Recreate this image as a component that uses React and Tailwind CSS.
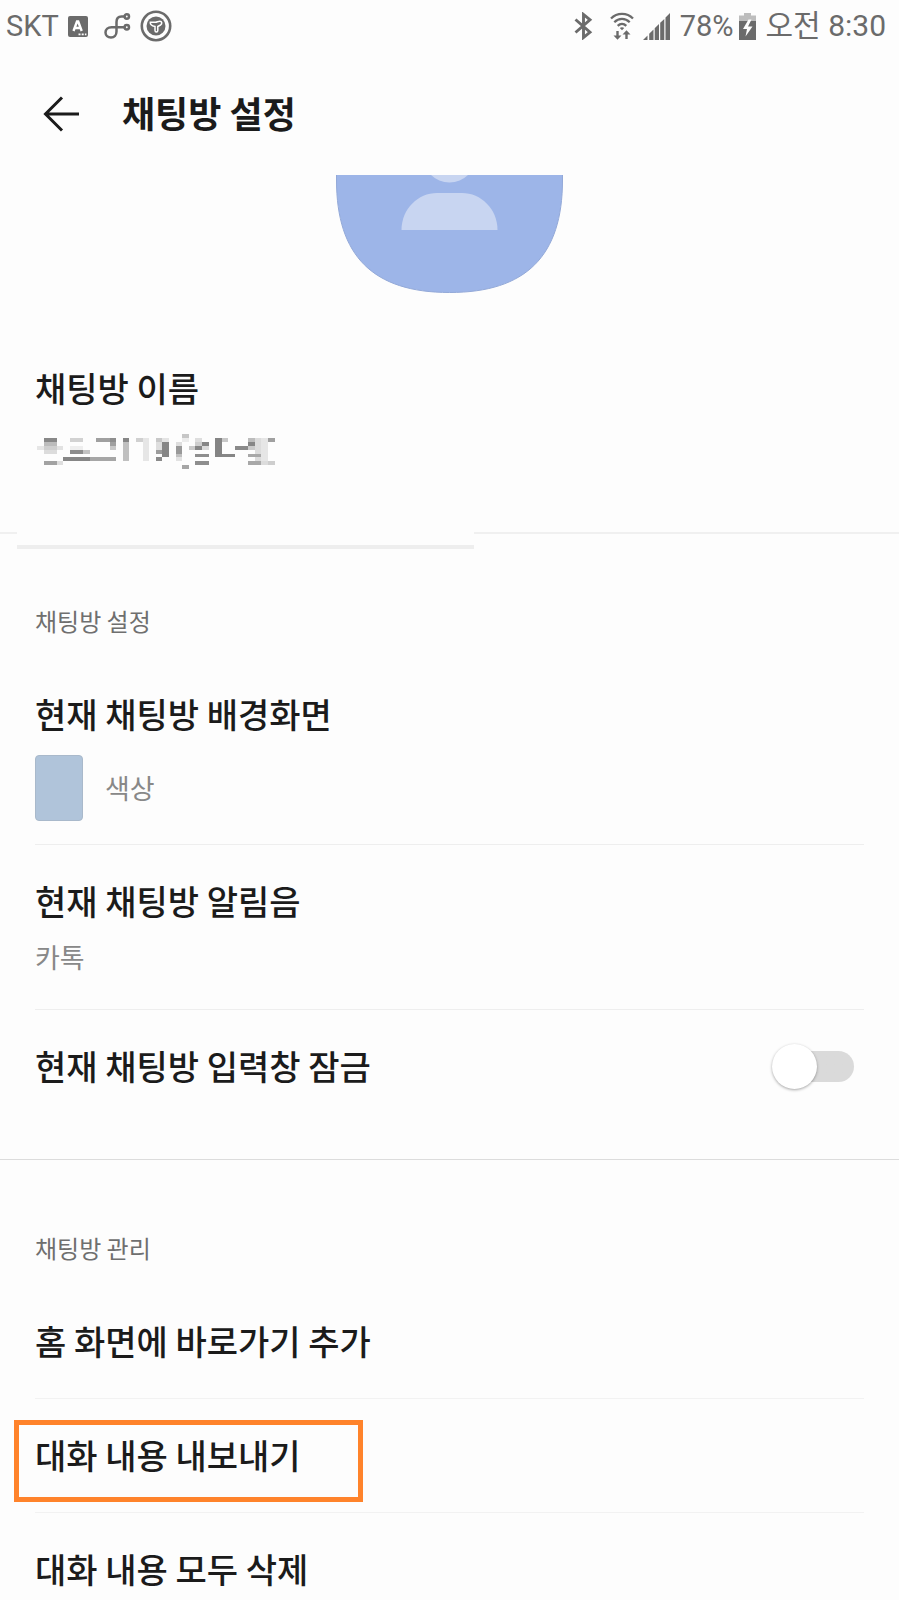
import { useState } from "react";

// [col, row, width, height, colour] on a 6.6 x 3.9 grid
const nameBlocks = [
  [1, 1, 2, 1, "#888"], [1, 2, 2, 1, "#bcbcbc"], [0, 3, 1, 1, "#e6e6e6"], [1, 3, 2, 1, "#cfcfcf"],
  [3, 3, 1, 1, "#e2e2e2"], [1, 4, 2, 1, "#dcdcdc"], [1, 7, 2, 1, "#a2a2a2"], [3, 7, 1, 1, "#dedede"],
  [5, 1, 2, 1, "#d2d2d2"], [5, 3, 2, 1, "#eee"], [5, 4, 2, 1, "#8c8c8c"], [7, 4, 1, 1, "#c2c2c2"],
  [4, 6, 4, 1, "#868686"], [8, 6, 4, 1, "#a6a6a6"],
  [9, 1, 2, 1, "#a0a0a0"], [11, 1, 1, 1, "#8e8e8e"], [11, 2, 1, 1, "#a0a0a0"], [11, 3, 1, 1, "#c8c8c8"],
  [13, 1, 1, 1, "#868686"], [13, 2, 1, 5, "#c0c0c0"],
  [15, 1, 1, 1, "#d0d0d0"], [16, 1, 1, 6, "#e6e6e6"],
  [18, 1, 1, 1, "#c8c8c8"], [19, 1, 1, 1, "#e4e4e4"], [18, 2, 1, 2, "#dedede"], [19, 2, 1, 4, "#868686"],
  [18, 4, 1, 1, "#9c9c9c"], [18, 6, 1, 1, "#8a8a8a"],
  [21, 2, 1, 1, "#dedede"], [21, 3, 1, 2, "#999"], [21, 5, 1, 1, "#c0c0c0"], [21, 6, 1, 1, "#e2e2e2"],
  [22, 0, 1, 1, "#c6c6c6"], [22, 1, 1, 1, "#ececec"], [22, 8, 1, 1, "#a6a6a6"],
  [24, 1, 1, 1, "#dedede"], [24, 2, 1, 1, "#cecece"], [25, 2, 1, 1, "#868686"], [23, 3, 1, 1, "#cacaca"],
  [24, 3, 1, 1, "#868686"], [25, 3, 1, 1, "#dadada"], [24, 5, 2, 1, "#8e8e8e"], [24, 7, 2, 1, "#8e8e8e"],
  [27, 1, 1, 5, "#848484"], [28, 1, 1, 1, "#c8c8c8"], [28, 5, 2, 1, "#868686"],
  [30, 3, 2, 1, "#8a8a8a"], [32, 1, 1, 1, "#bcbcbc"], [32, 2, 1, 1, "#868686"], [32, 3, 1, 1, "#cacaca"],
  [33, 1, 1, 6, "#dcdcdc"], [34, 1, 1, 6, "#e6e6e6"], [32, 5, 2, 1, "#a8a8a8"], [32, 7, 2, 1, "#a8a8a8"],
  [34, 7, 1, 1, "#dcdcdc"], [35, 1, 1, 1, "#a0a0a0"], [35, 7, 1, 1, "#cecece"],
];

function StatusBar() {
  return (
    <div className="flex h-[52px] items-center justify-between pl-[6px] pr-[13px] font-[Roboto,'Noto_Sans_CJK_KR',sans-serif] text-[29px] leading-8 text-[#6b6b6b]">
      <div className="flex items-center">
        <span>SKT</span>
        <svg className="ml-[9px]" width="20" height="21" viewBox="0 0 20 21" aria-hidden="true">
          <rect width="20" height="21" rx="2" fill="#6b6b6b" />
          <path d="M5.500 15 9 5.500h1.200L13.700 15M7 12h5.200" fill="none" stroke="#fff" strokeWidth="2.400" />
          <path d="M10.500 18.300h2M13.700 18.300h2M16.900 18.300h1.500" stroke="#fff" strokeWidth="1.800" />
        </svg>
        <svg className="ml-4" width="27" height="26" viewBox="0 0 27 26" fill="none" stroke="#6b6b6b" strokeWidth="2.500" aria-hidden="true">
          <path d="M20.500 3.500H17.500C14 3.500 12.500 5.500 12.500 9V18.500C12.500 22 10.300 24.500 7 24.500C3.800 24.500 1.500 22.300 1.500 19.500C1.500 16.300 4 14.300 7.500 14.300H20.500" />
          <circle cx="22.800" cy="3.500" r="2.200" />
          <circle cx="22.800" cy="14.300" r="2.200" />
        </svg>
        <svg className="ml-[9px]" width="32" height="32" viewBox="0 0 32 32" aria-hidden="true">
          <circle cx="16" cy="16" r="14.200" fill="none" stroke="#6b6b6b" strokeWidth="2.600" />
          <circle cx="16" cy="16" r="9.500" fill="#6b6b6b" />
          <path
            d="M10.300 12.200H15.500C17 12.200 18 11.200 19.800 11.200C22 11.200 22.500 13.800 20.500 15L17.800 16.500V20.500C17.800 22.500 15 22.500 15 20.500V16.500C12 16 10 14.500 10.300 12.200Z"
            fill="none"
            stroke="#fff"
            strokeWidth="1.500"
          />
        </svg>
      </div>
      <div className="flex items-center">
        <svg width="19" height="28" viewBox="0 0 19 28" fill="none" stroke="#6b6b6b" strokeWidth="2.900" aria-hidden="true">
          <path d="M1.500 7.500 16 20.200 9.500 25.500V2.500L16 7.800 1.500 20.500" />
        </svg>
        <svg className="ml-[17px]" width="24" height="28" viewBox="0 0 24 28" fill="none" stroke="#6b6b6b" aria-hidden="true">
          <path d="M1 6.500C7 .3 17 .3 23 6.500M4.300 10.300C8.800 5.800 15.200 5.800 19.700 10.300M7.700 13.800C10.300 11.300 13.700 11.300 16.300 13.800" strokeWidth="2.300" />
          <path d="M9.800 16 12 18.200 14.200 16C13 14.900 11 14.900 9.800 16Z" fill="#6b6b6b" stroke="none" />
          <path d="M7.500 19V25M16.500 27V21" strokeWidth="2.400" />
          <path d="M3.500 23.500H11.500L7.500 27.800ZM12.500 22.500H20.500L16.500 18.200Z" fill="#6b6b6b" stroke="none" />
        </svg>
        <svg className="ml-[9px]" width="27" height="27" viewBox="0 0 27 27" fill="#6b6b6b" aria-hidden="true">
          <path d="M0 27 4.500 22.500V27ZM6.200 20.800 10.500 16.500V27H6.200ZM11.700 15.300 16 11V27H11.700ZM17.200 9.800 21.300 6V27H17.200ZM22.500 4.500 27 0V27H22.500Z" />
        </svg>
        <span className="ml-2.5">78%</span>
        <svg className="ml-[5px]" width="17" height="27" viewBox="0 0 17 27" aria-hidden="true">
          <path d="M5 0h7v2.500h5V8H0V2.500h5Z" fill="#bdbdbd" />
          <path d="M0 8h17v19H0Z" fill="#6b6b6b" />
          <path d="M9.500 6.500 4 16h4L6.500 23.500 13.500 13.500H9L12.500 6.500Z" fill="#fdfdfd" />
        </svg>
        <span className="ml-2.5 text-[30px]">오전 8:30</span>
      </div>
    </div>
  );
}

function Avatar() {
  return (
    <svg className="mx-auto block" width="227" height="118" viewBox="0 109 227 118" aria-hidden="true">
      <path d="M.5 109V114C.5 190 37 226.500 113.500 226.500S226.500 190 226.500 114V109" fill="#9db5e8" stroke="#93a9d8" />
      <circle cx="113.500" cy="90" r="26.500" fill="#c8d5f1" />
      <path d="M65.500 164C65.500 143 82 127 101 127H126C145 127 161.500 143 161.500 164Z" fill="#c8d5f1" />
    </svg>
  );
}

function HiddenName() {
  return (
    <svg className="block" width="240" height="36" viewBox="0 0 240 36" shapeRendering="crispEdges" aria-hidden="true">
      {nameBlocks.map(([x, y, w, h, fill]) => (
        <rect key={`${x}-${y}`} x={x * 6.6} y={y * 3.9} width={w * 6.6} height={h * 3.9} fill={fill} />
      ))}
    </svg>
  );
}

function SectionLabel({ children }) {
  return <h2 className="px-[35px] text-[24px] leading-8 text-[#6f6f6f]">{children}</h2>;
}

function RowTitle({ children }) {
  return <span className="block text-[34px] font-medium leading-10">{children}</span>;
}

export default function App() {
  const [locked, setLocked] = useState(false);

  return (
    <div className="min-h-screen bg-[#fdfdfd] font-['Noto_Sans_CJK_KR',sans-serif] text-[#1b1b1b]">
      <StatusBar />

      <header className="flex h-[123px] items-center gap-[42px] pl-[43px]">
        <button type="button" aria-label="뒤로">
          <svg width="37" height="36" viewBox="0 0 37 36" fill="none" stroke="#1b1b1b" strokeWidth="3" aria-hidden="true">
            <path d="M19 1.500 2.500 18 19 34.500M2.500 18H36" />
          </svg>
        </button>
        <h1 className="pb-1 text-[36px] font-bold leading-10">채팅방 설정</h1>
      </header>

      <main>
        <Avatar />

        <button type="button" className="mt-[75px] block w-full px-[35px] text-left">
          <RowTitle>채팅방 이름</RowTitle>
          <span className="mt-[26px] block pl-0.5">
            <HiddenName />
          </span>
        </button>

        {/* full-width divider, broken by the raised strip */}
        <div className="mt-[62px] flex items-start">
          <span className="h-0.5 w-[17px] bg-[#f0f0f0]" />
          <span className="h-[17px] w-[457px] border-b-4 border-[#eee]" />
          <span className="h-0.5 flex-1 bg-[#f0f0f0]" />
        </div>

        <section className="border-b border-[#dcdcdc] pt-14">
          <SectionLabel>채팅방 설정</SectionLabel>
          <div className="px-[35px]">
            <button type="button" className="mt-[57px] block w-full border-b border-[#eee] pb-[23px] text-left">
              <RowTitle>현재 채팅방 배경화면</RowTitle>
              <span className="mt-[21px] flex items-center gap-[22px]">
                <span className="h-[66px] w-12 rounded-[4px] border border-[#a9b9cb] bg-[#b0c4da]" />
                <span className="text-[27px] leading-8 text-[#888]">색상</span>
              </span>
            </button>
            <button type="button" className="block w-full border-b border-[#eee] pb-9 pt-9 text-left">
              <RowTitle>현재 채팅방 알림음</RowTitle>
              <span className="mt-5 block text-[27px] leading-8 text-[#888]">카톡</span>
            </button>
            <label className="flex items-center justify-between pb-[73px] pr-2.5 pt-9">
              <RowTitle>현재 채팅방 입력창 잠금</RowTitle>
              <input
                type="checkbox"
                checked={locked}
                onChange={(e) => setLocked(e.target.checked)}
                className="peer sr-only"
              />
              <span className="flex h-[31px] w-[82px] items-center rounded-full bg-linear-to-r from-transparent from-25% to-[#dadada] to-25% peer-checked:justify-end peer-checked:bg-[#fae100]">
                <span className="size-[45px] rounded-full bg-white shadow-[0_1px_3px_rgba(0,0,0,0.35)]" />
              </span>
            </label>
          </div>
        </section>

        <section className="pb-2.5 pt-[72px]">
          <SectionLabel>채팅방 관리</SectionLabel>
          <div className="px-[35px]">
            <button type="button" className="mt-[57px] block w-full border-b border-[#f2f2f2] pb-[37px] text-left">
              <RowTitle>홈 화면에 바로가기 추가</RowTitle>
            </button>
            <button type="button" className="relative block w-full border-b border-[#f2f2f2] pb-[37px] pt-9 text-left">
              <RowTitle>대화 내용 내보내기</RowTitle>
              <span className="absolute -left-[21px] top-[21px] h-[82px] w-[349px] border-5 border-[#ff832b]" />
            </button>
            <button type="button" className="block w-full pt-9 text-left">
              <RowTitle>대화 내용 모두 삭제</RowTitle>
            </button>
          </div>
        </section>
      </main>
    </div>
  );
}
